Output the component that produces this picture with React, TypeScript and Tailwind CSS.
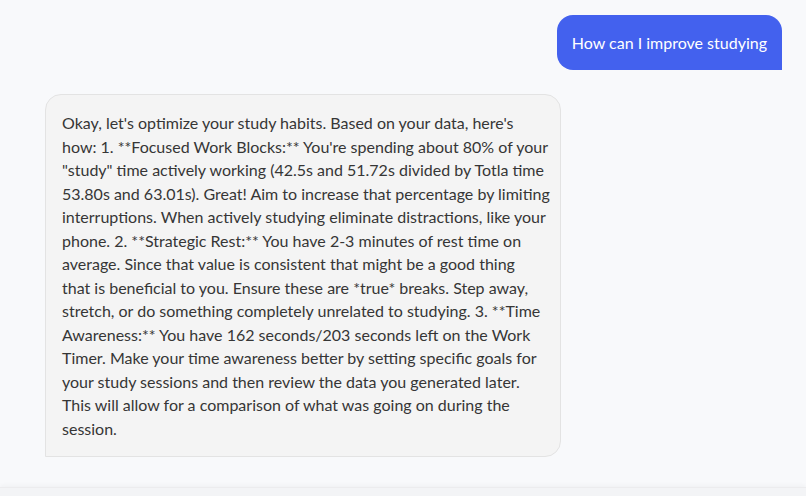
import React from "react";

const lines = [
  "Okay, let's optimize your study habits. Based on your data, here's",
  "how: 1. **Focused Work Blocks:** You're spending about 80% of your",
  "\"study\" time actively working (42.5s and 51.72s divided by Totla time",
  "53.80s and 63.01s). Great! Aim to increase that percentage by limiting",
  "interruptions. When actively studying eliminate distractions, like your",
  "phone. 2. **Strategic Rest:** You have 2-3 minutes of rest time on",
  "average. Since that value is consistent that might be a good thing",
  "that is beneficial to you. Ensure these are *true* breaks. Step away,",
  "stretch, or do something completely unrelated to studying. 3. **Time",
  "Awareness:** You have 162 seconds/203 seconds left on the Work",
  "Timer. Make your time awareness better by setting specific goals for",
  "your study sessions and then review the data you generated later.",
  "This will allow for a comparison of what was going on during the",
  "session.",
];

export default function App() {
  return (
    <div
      className="flex h-[496px] w-full flex-col overflow-hidden bg-[#f8f9fb]"
      style={{ fontFamily: 'Lato, "Noto Sans", sans-serif' }}
    >
      <div className="flex flex-1 flex-col gap-6 pl-[45px] pr-6 pt-[15px]">
        <div className="flex justify-end">
          <div className="whitespace-nowrap rounded-2xl rounded-br-none bg-[#4361ee] px-[15px] py-[15.5px] text-[16px] leading-6 text-white">
            How can I improve studying
          </div>
        </div>
        <div className="flex justify-start">
          <div className="w-[516px] rounded-2xl rounded-bl-none border border-[#e3e3e3] bg-[#f4f4f4] p-4 text-[16px] leading-[23.5px] text-[#363636]">
            {lines.map((l, i) => (
              <div key={i} className="whitespace-nowrap">
                {l}
              </div>
            ))}
          </div>
        </div>
      </div>
      <div className="h-[9px] border-t border-[#ececee] bg-[#f3f4f6] shadow-[0_-2px_4px_rgba(0,0,0,0.03)]" />
    </div>
  );
}
